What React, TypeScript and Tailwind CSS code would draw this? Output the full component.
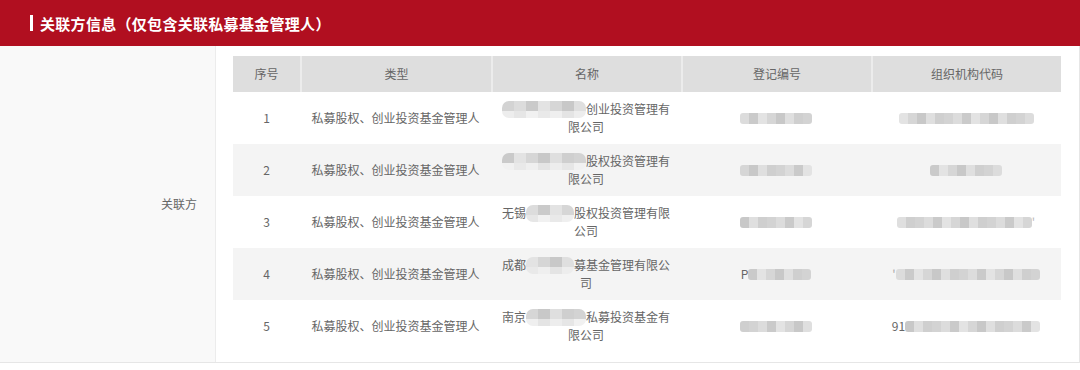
import React from "react";

// Grey tiles used to mask redacted values
const DARK = [
  "bg-[#d3d3d3]",
  "bg-[#dcdcdc]",
  "bg-[#cacaca]",
  "bg-[#e3e3e3]",
  "bg-[#d6d6d6]",
  "bg-[#c8c8c8]",
  "bg-[#dfdfdf]",
  "bg-[#cfcfcf]",
];
const LIGHT = [
  "bg-[#ededed]",
  "bg-[#e6e6e6]",
  "bg-[#f1f1f1]",
  "bg-[#e9e9e9]",
  "bg-[#efefef]",
  "bg-[#e4e4e4]",
];

function Mask({ cells, offset = 0, wide = false }: { cells: number; offset?: number; wide?: boolean }) {
  const cw = wide ? "w-[12px]" : "w-[9px]";
  const list = Array.from({ length: cells });
  if (wide) {
    return (
      <span className="inline-flex flex-col align-top mt-[1px] overflow-hidden rounded-[7px] blur-[0.6px]">
        <span className="flex">
          {list.map((_, i) => (
            <span key={i} className={`h-[10px] ${cw} ${DARK[(i + offset) % DARK.length]}`} />
          ))}
        </span>
        <span className="flex">
          {list.map((_, i) => (
            <span key={i} className={`h-[7px] ${cw} ${LIGHT[(i + offset) % LIGHT.length]}`} />
          ))}
        </span>
      </span>
    );
  }
  return (
    <span className="inline-flex align-middle overflow-hidden rounded-[3px] blur-[0.5px]">
      {list.map((_, i) => (
        <span key={i} className={`h-[11px] ${cw} ${DARK[(i + offset) % DARK.length]}`} />
      ))}
    </span>
  );
}

type Row = {
  no: number;
  name: React.ReactNode;
  reg: React.ReactNode;
  org: React.ReactNode;
};

const TYPE = "私募股权、创业投资基金管理人";

const rows: Row[] = [
  {
    no: 1,
    name: (
      <>
        <Mask cells={7} wide />
        创业投资管理有限公司
      </>
    ),
    reg: <Mask cells={8} offset={1} />,
    org: <Mask cells={15} offset={3} />,
  },
  {
    no: 2,
    name: (
      <>
        <Mask cells={7} wide offset={2} />
        股权投资管理有限公司
      </>
    ),
    reg: <Mask cells={8} offset={4} />,
    org: <Mask cells={8} offset={2} />,
  },
  {
    no: 3,
    name: (
      <>
        无锡
        <Mask cells={4} wide offset={1} />
        股权投资管理有限公司
      </>
    ),
    reg: <Mask cells={8} offset={5} />,
    org: (
      <>
        <Mask cells={15} offset={6} />
        <span className="text-[#bbb]">'</span>
      </>
    ),
  },
  {
    no: 4,
    name: (
      <>
        成都
        <Mask cells={4} wide offset={3} />
        募基金管理有限公司
      </>
    ),
    reg: (
      <>
        <span>P</span>
        <Mask cells={7} offset={2} />
      </>
    ),
    org: (
      <>
        <span className="text-[#aaa]">'</span>
        <Mask cells={16} offset={1} />
      </>
    ),
  },
  {
    no: 5,
    name: (
      <>
        南京
        <Mask cells={5} wide offset={4} />
        私募投资基金有限公司
      </>
    ),
    reg: <Mask cells={8} offset={7} />,
    org: (
      <>
        <span>91</span>
        <Mask cells={15} offset={5} />
      </>
    ),
  },
];

const HEAD = ["序号", "类型", "名称", "登记编号", "组织机构代码"];

export default function App() {
  return (
    <div className="w-[1080px] h-[370px] bg-white font-['Noto_Sans_CJK_SC','Noto_Sans',sans-serif] text-[#666]">
      <div className="h-[46px] bg-[#b10f20] flex items-center pl-[30px]">
        <span className="w-[3px] h-[16px] bg-white mr-[7px]" />
        <span className="text-[15px] font-bold text-white leading-none tracking-[0.3px]">
          关联方信息（仅包含关联私募基金管理人）
        </span>
      </div>

      <div className="flex w-[1080px] border-r border-b border-[#e6e6e6]">
        <div className="w-[216px] shrink-0 bg-[#f9f9f9] border-r border-[#ececec] flex items-center justify-end pr-[18px] text-[12px]">
          关联方
        </div>

        <div className="flex-1 pt-[10px] pb-[10px] pl-[17px]">
          <div className="grid grid-cols-[67px_191px_190px_190px_190px] w-[828px] text-[12px]">
            {HEAD.map((h, i) => (
              <div
                key={h}
                className={`h-[36px] bg-[#dedede] flex items-center justify-center ${i > 0 ? "border-l-2 border-[#ececec]" : ""}`}
              >
                {h}
              </div>
            ))}

            {rows.map((r) => {
              const bg = r.no % 2 === 0 ? "bg-[#f4f4f4]" : "bg-white";
              return (
                <React.Fragment key={r.no}>
                  <div className={`h-[52px] ${bg} flex items-center justify-center`}>{r.no}</div>
                  <div className={`h-[52px] ${bg} flex items-center justify-center`}>{TYPE}</div>
                  <div className={`h-[52px] ${bg} flex items-center justify-center px-[10px]`}>
                    <p className="w-full text-center leading-[18px] break-all">{r.name}</p>
                  </div>
                  <div className={`h-[52px] ${bg} flex items-center justify-center`}>{r.reg}</div>
                  <div className={`h-[52px] ${bg} flex items-center justify-center`}>{r.org}</div>
                </React.Fragment>
              );
            })}
          </div>
        </div>
      </div>
    </div>
  );
}
